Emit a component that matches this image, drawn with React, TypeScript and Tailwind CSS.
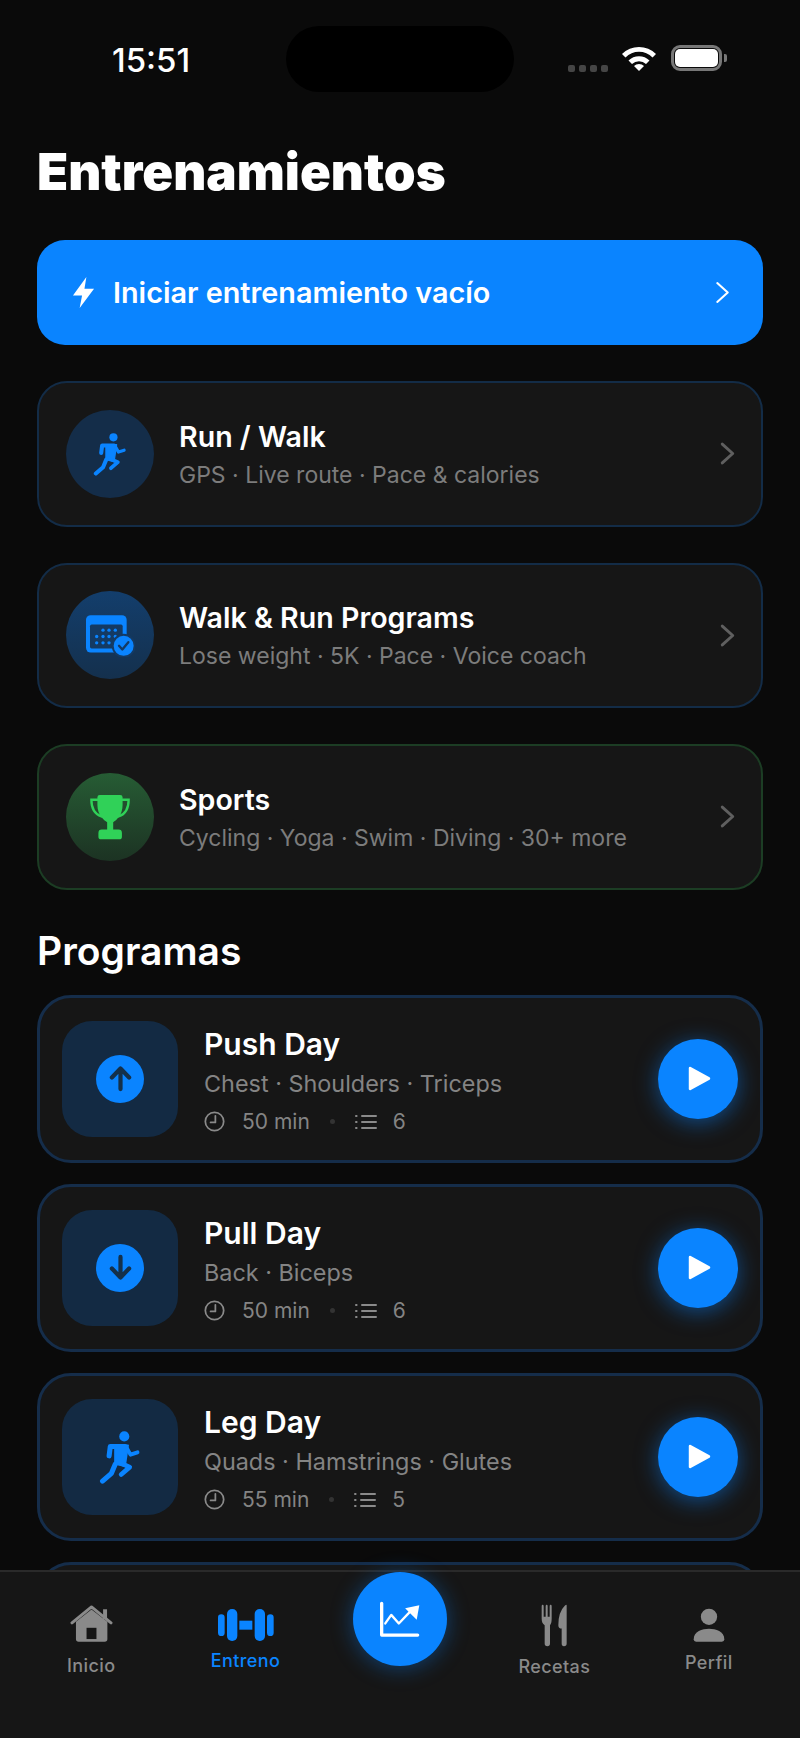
import type { ReactNode } from 'react';

const BLUE = '#0a84ff';

function Runner({ className }: { className: string }) {
  return (
    <svg viewBox="125 92 108 140" className={className} fill="none" stroke={BLUE} strokeLinecap="round" strokeLinejoin="round">
      <circle cx="190" cy="109" r="13" fill={BLUE} stroke="none" />
      <path d="M151 159 L154 135 L192 135" strokeWidth="13" />
      <path d="M166 132 H200 L192 186 L166 180 Z" fill={BLUE} strokeWidth="4" />
      <path d="M197 140 L206 156 L224 150" strokeWidth="10" />
      <path d="M176 176 L204 188 L182 207" strokeWidth="12" />
      <path d="M167 180 L157 204 L134 224" strokeWidth="13" />
    </svg>
  );
}

function CalendarCheck() {
  return (
    <svg viewBox="115 100 150 128" className="h-[43px] w-[50px]">
      <rect x="118" y="103" width="122" height="112" rx="14" fill={BLUE} />
      <rect x="130" y="131" width="98" height="72" rx="5" fill="#143a63" />
      {[
        [169, 148], [187, 148], [206, 148],
        [150, 167], [169, 167], [187, 167], [206, 167],
        [150, 186], [169, 186], [187, 186],
      ].map(([cx, cy]) => (
        <circle key={`${cx}-${cy}`} cx={cx} cy={cy} r="5" fill={BLUE} />
      ))}
      <circle cx="231" cy="195" r="36" fill="#143a63" />
      <circle cx="231" cy="195" r="30" fill={BLUE} />
      <path d="M217 195 L227 206 L245 184" fill="none" stroke="#143a63" strokeWidth="7" strokeLinecap="round" strokeLinejoin="round" />
    </svg>
  );
}

function Trophy() {
  return (
    <svg viewBox="115 105 125 137" className="h-[46px] w-[42px]">
      <path d="M141 122 H122 C122 150 135 166 152 172 M214 122 H233 C233 150 221 166 203 172" fill="none" stroke="#30d158" strokeWidth="7" strokeLinecap="round" />
      <path d="M147 108 H208 Q215 108 215 115 V138 C215 168 196 184 187 189 V211 H203 Q213 211 213 221 V232 Q213 240 205 240 H151 Q143 240 143 232 V221 Q143 211 153 211 H169 V189 C160 184 140 168 140 138 V115 Q140 108 147 108 Z" fill="#30d158" />
    </svg>
  );
}

function Chevron({ className, color, weight }: { className: string; color: string; weight: string }) {
  return (
    <svg viewBox="0 0 14 22" className={className} fill="none" stroke={color} strokeWidth={weight} strokeLinecap="round" strokeLinejoin="round">
      <path d="M2 2 L12 11 L2 20" />
    </svg>
  );
}

function FeatureCard({ icon, circle, border, title, subtitle }: { icon: ReactNode; circle: string; border: string; title: string; subtitle: string }) {
  return (
    <div className={`flex h-[145.5px] items-center rounded-[30px] border-2 bg-[#161616] pl-[27px] pr-[26px] ${border}`}>
      <div className={`flex h-[88px] w-[88px] shrink-0 items-center justify-center rounded-full ${circle}`}>{icon}</div>
      <div className="ml-[25px] min-w-0 flex-1 pt-[2px]">
        <div className="text-[28.6px] leading-[34px] font-semibold text-white">{title}</div>
        <div className="mt-[6px] text-[23px] leading-[30px] text-[#7c7c7c]">{subtitle}</div>
      </div>
      <Chevron className="h-[23px] w-[15px]" color="#5f5f5f" weight="2.8" />
    </div>
  );
}

function Clock() {
  return (
    <svg viewBox="0 0 24 24" className="h-[21px] w-[21px]" fill="none" stroke="#8a8a8a" strokeWidth="2" strokeLinecap="round" strokeLinejoin="round">
      <circle cx="12" cy="12" r="10.5" />
      <path d="M13 5.5 V13 H7.5" />
    </svg>
  );
}

function ListIcon() {
  return (
    <svg viewBox="0 0 22 16" className="h-[16px] w-[22px]" fill="none" stroke="#8a8a8a" strokeWidth="2" strokeLinecap="round">
      <path d="M7 2 H21 M7 8 H21 M7 14 H21" />
      <path d="M1 2 H1.6 M1 8 H1.6 M1 14 H1.6" />
    </svg>
  );
}

function ArrowBadge({ down }: { down?: boolean }) {
  return (
    <div className="flex h-[48px] w-[48px] items-center justify-center rounded-full bg-[#0a84ff]">
      <svg viewBox="0 0 24 28" className={`h-[27px] w-[23px] ${down ? 'rotate-180' : ''}`} fill="none" stroke="#14304a" strokeWidth="4.4" strokeLinecap="round" strokeLinejoin="round">
        <path d="M12 25 V4 M3 13 L12 3.5 L21 13" />
      </svg>
    </div>
  );
}

function ProgramCard({ icon, title, subtitle, mins, count }: { icon: ReactNode; title: string; subtitle: string; mins: string; count: string }) {
  return (
    <div className="flex h-[168px] items-center rounded-[34px] border-[3px] border-[#152d4a] bg-[#161616] pl-[22px] pr-[22px]">
      <div className="flex h-[116px] w-[116px] shrink-0 items-center justify-center rounded-[30px] bg-[#132a43]">{icon}</div>
      <div className="ml-[26px] min-w-0 flex-1 pt-[2px]">
        <div className="text-[30px] leading-[36px] font-semibold text-white">{title}</div>
        <div className="mt-[7px] text-[23.4px] leading-[30px] text-[#848484]">{subtitle}</div>
        <div className="mt-[11px] flex h-[24px] items-center text-[21px] text-[#848484]">
          <Clock />
          <span className="ml-[17px]">{mins}</span>
          <span className="ml-[20px] h-[5px] w-[5px] rounded-full bg-[#333333]" />
          <span className="ml-[20px]"><ListIcon /></span>
          <span className="ml-[16px]">{count}</span>
        </div>
      </div>
      <div className="flex h-[80px] w-[80px] shrink-0 items-center justify-center rounded-full bg-[#0a84ff] shadow-[0_4px_22px_rgba(10,132,255,0.5)]">
        <svg viewBox="0 0 22 24" className="ml-[2px] h-[25px] w-[23px]" fill="#ffffff" stroke="#ffffff" strokeWidth="2.6" strokeLinejoin="round">
          <path d="M2 2 L20 12 L2 22 Z" />
        </svg>
      </div>
    </div>
  );
}

function NavItem({ label, active, className, labelGap, children }: { label: string; active?: boolean; className: string; labelGap: string; children: ReactNode }) {
  return (
    <div className={`flex flex-col items-center ${className}`}>
      <div className="flex items-center justify-center">{children}</div>
      <div className={`tracking-[0.4px] text-[18px] leading-[22px] font-medium ${labelGap} ${active ? 'text-[#0a84ff]' : 'text-[#8a8a8a]'}`}>{label}</div>
    </div>
  );
}

function TabBar() {
  return (
    <div className="absolute inset-x-0 bottom-0 h-[168px] border-t-2 border-[#2a2a2a] bg-[#161616]">
      <div className="grid grid-cols-5 px-[14px]">
        <NavItem label="Inicio" labelGap="mt-[12px]" className="pt-[32px]">
          <svg viewBox="90 78 130 114" className="h-[39px] w-[43px]" fill="#8a8a8a">
            <rect x="190" y="92" width="12" height="30" />
            <path d="M108 130 L155 93 L203 130 V182 Q203 190 195 190 H116 Q108 190 108 182 Z" />
            <rect x="140" y="148" width="30" height="34" fill="#161616" />
            <path d="M96 133 L155 85 L214 133" fill="none" stroke="#8a8a8a" strokeWidth="9" strokeLinecap="round" strokeLinejoin="round" />
          </svg>
        </NavItem>
        <NavItem label="Entreno" active labelGap="mt-[9px]" className="pt-[37px]">
          <svg viewBox="535 87 168 96" className="h-[32px] w-[56px]" fill="#0a84ff">
            <rect x="535" y="103" width="20" height="65" rx="10" />
            <rect x="562" y="87" width="31" height="96" rx="15" />
            <rect x="599" y="122" width="39" height="27" />
            <rect x="645" y="87" width="31" height="96" rx="15" />
            <rect x="682" y="103" width="20" height="65" rx="10" />
          </svg>
        </NavItem>
        <div className="flex justify-center">
          <div className="flex h-[94px] w-[94px] items-center justify-center rounded-full bg-[#0a84ff] shadow-[0_2px_22px_rgba(10,132,255,0.4)]">
            <svg viewBox="118 118 124 112" className="h-[37px] w-[41px]" fill="none" stroke="#ffffff" strokeLinecap="round" strokeLinejoin="round">
              <path d="M126 125 V221 H235" strokeWidth="10" />
              <path d="M137 186 L155 160 L178 186 L215 147" strokeWidth="7" />
              <path d="M197 140 L240 131 L232 175 Z" fill="#ffffff" stroke="none" />
            </svg>
          </div>
        </div>
        <NavItem label="Recetas" labelGap="mt-[9px]" className="pt-[32px]">
          <svg viewBox="603 132 78 128" className="h-[43px] w-[26px]" fill="#8a8a8a">
            <path d="M605 138 Q605 134 608 134 Q611 134 611 138 V170 H617 V138 Q617 134 620 134 Q623 134 623 138 V170 H629 V138 Q629 134 632 134 Q635 134 635 138 V175 Q635 190 630 195 V250 Q630 258 622 258 Q614 258 614 250 V195 Q605 190 605 175 Z" />
            <path d="M680 136 Q680 131 675 136 Q655 155 655 195 Q655 205 665 205 V250 Q665 258 672 258 Q680 258 680 250 Z" />
          </svg>
        </NavItem>
        <NavItem label="Perfil" labelGap="mt-[10px]" className="pt-[36px]">
          <svg viewBox="1058 146 94 100" className="h-[34px] w-[32px]" fill="#8a8a8a">
            <circle cx="1105" cy="172" r="24" />
            <path d="M1060 238 C1060 215 1085 207 1105 207 C1125 207 1150 215 1150 238 Q1150 245 1143 245 H1067 Q1060 245 1060 238 Z" />
          </svg>
        </NavItem>
      </div>
    </div>
  );
}

export default function App() {
  return (
    <div className="relative h-[1738px] w-[800px] overflow-hidden bg-[#0a0a0a] font-['Inter',sans-serif] text-white">
      {/* status bar */}
      <div className="flex h-[92px] pl-[112px] pt-[26px]">
        <div className="w-[174px] pt-[14px] text-[33px] leading-[40px] font-medium">15:51</div>
        <div className="h-[66px] w-[228px] rounded-[33px] bg-black" />
        <div className="ml-[54px] mt-[9px] flex h-[44px] items-center pt-[2px]">
          <div className="flex gap-[4px] pt-[20px]">
            {[0, 1, 2, 3].map((i) => (
              <span key={i} className="h-[7px] w-[7px] rounded-[2px] bg-[#454545]" />
            ))}
          </div>
          <svg viewBox="0 0 36 26" className="ml-[13px] h-[26px] w-[36px]" fill="#ffffff">
            <path d="M1 9 A24 24 0 0 1 35 9 L31.5 12.5 A19 19 0 0 0 4.5 12.5 Z" />
            <path d="M7.5 15.5 A15 15 0 0 1 28.5 15.5 L25 19 A10 10 0 0 0 11 19 Z" />
            <path d="M13 21 A7 7 0 0 1 23 21 L18 26 Z" />
          </svg>
          <div className="ml-[14px] flex h-[26px] w-[51px] rounded-[9px] border-[3px] border-[#777777] p-[1px]">
            <div className="h-full w-full rounded-[5px] bg-white" />
          </div>
          <span className="ml-[2px] h-[8px] w-[3px] rounded-r-[2px] bg-[#777777]" />
        </div>
      </div>

      <div className="px-[37px]">
        <h1 className="mt-[52px] text-[51px] leading-[56px] font-black">Entrenamientos</h1>

        <div className="mt-[40px] flex h-[105px] items-center rounded-[28px] bg-[#0a84ff] pl-[35px] pr-[33px]">
          <svg viewBox="0 0 24 34" className="h-[33px] w-[23px]" fill="#ffffff">
            <path d="M15 0.8 L1 20 H10.5 L8 33.2 L23 13 H13 Z" />
          </svg>
          <div className="ml-[18px] flex-1 text-[28.8px] leading-[34px] font-semibold">Iniciar entrenamiento vacío</div>
          <Chevron className="h-[23px] w-[15px]" color="#ffffff" weight="2" />
        </div>

        <div className="mt-[36px] flex flex-col gap-[36px]">
          <FeatureCard
            icon={<Runner className="h-[44px] w-[34px]" />}
            circle="bg-[#142d49]"
            border="border-[#132c47]"
            title="Run / Walk"
            subtitle="GPS · Live route · Pace & calories"
          />
          <FeatureCard
            icon={<CalendarCheck />}
            circle="bg-linear-to-b from-[#133e6c] to-[#14304d]"
            border="border-[#132c47]"
            title="Walk & Run Programs"
            subtitle="Lose weight · 5K · Pace · Voice coach"
          />
          <FeatureCard
            icon={<Trophy />}
            circle="bg-linear-to-b from-[#265c34] to-[#1c3323]"
            border="border-[#1c3d24]"
            title="Sports"
            subtitle="Cycling · Yoga · Swim · Diving · 30+ more"
          />
        </div>

        <h2 className="mt-[39px] text-[39px] leading-[44px] font-semibold">Programas</h2>

        <div className="mt-[22px] flex flex-col gap-[21px]">
          <ProgramCard icon={<ArrowBadge />} title="Push Day" subtitle="Chest · Shoulders · Triceps" mins="50 min" count="6" />
          <ProgramCard icon={<ArrowBadge down />} title="Pull Day" subtitle="Back · Biceps" mins="50 min" count="6" />
          <ProgramCard icon={<Runner className="h-[56px] w-[42px]" />} title="Leg Day" subtitle="Quads · Hamstrings · Glutes" mins="55 min" count="5" />
          <div className="h-[168px] rounded-[34px] border-[3px] border-[#152d4a] bg-[#161616]" />
        </div>
      </div>

      <TabBar />
    </div>
  );
}
